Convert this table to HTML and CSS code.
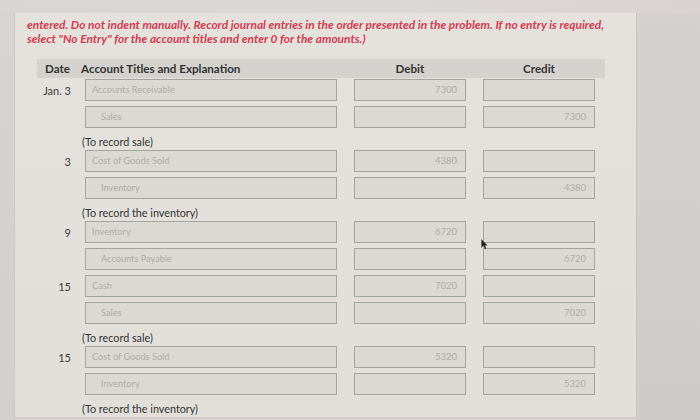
FILE: index.html
```html
<!DOCTYPE html>
<html>
<head>
<meta charset="utf-8">
<link rel="stylesheet" href="styles.css">
</head>
<body>
<div class="topbar"></div>
<div class="main">
  <div class="side-left"></div>
  <div class="panel">
    <p class="instr">entered. Do not indent manually. Record journal entries in the order presented in the problem. If no entry is required,<br>select "No Entry" for the account titles and enter 0 for the amounts.)</p>
    <div class="journal">
      <div class="head">
        <span class="h-date">Date</span>
        <span class="h-acct">Account Titles and Explanation</span>
        <span class="h-debit">Debit</span>
        <span class="h-credit">Credit</span>
      </div>

      <div class="entry first"><span class="date">Jan. 3</span><div class="box acct">Accounts Receivable</div><div class="box amt">7300</div><div class="box amt"></div></div>
      <div class="entry"><span class="date"></span><div class="box acct cr">Sales</div><div class="box amt"></div><div class="box amt">7300</div></div>
      <div class="note">(To record sale)</div>

      <div class="entry after-note"><span class="date">3</span><div class="box acct">Cost of Goods Sold</div><div class="box amt">4380</div><div class="box amt"></div></div>
      <div class="entry"><span class="date"></span><div class="box acct cr">Inventory</div><div class="box amt"></div><div class="box amt">4380</div></div>
      <div class="note">(To record the inventory)</div>

      <div class="entry after-note"><span class="date">9</span><div class="box acct">Inventory</div><div class="box amt">6720</div><div class="box amt"></div></div>
      <div class="entry"><span class="date"></span><div class="box acct cr">Accounts Payable</div><div class="box amt"></div><div class="box amt">6720</div></div>

      <div class="entry"><span class="date">15</span><div class="box acct">Cash</div><div class="box amt">7020</div><div class="box amt"></div></div>
      <div class="entry"><span class="date"></span><div class="box acct cr">Sales</div><div class="box amt"></div><div class="box amt">7020</div></div>
      <div class="note">(To record sale)</div>

      <div class="entry after-note"><span class="date">15</span><div class="box acct">Cost of Goods Sold</div><div class="box amt">5320</div><div class="box amt"></div></div>
      <div class="entry"><span class="date"></span><div class="box acct cr">Inventory</div><div class="box amt"></div><div class="box amt">5320</div></div>
      <div class="note">(To record the inventory)</div>
    </div>
    <svg class="cursor" width="7" height="11" viewBox="0 0 7 11"><path d="M0.5 0.5 L0.5 8.5 L2.5 6.8 L4 10 L5.2 9.4 L3.8 6.3 L6.2 6.2 Z" fill="#222" stroke="#555" stroke-width="0.5"/></svg>
  </div>
  <div class="side-right"></div>
</div>
</body>
</html>
```
FILE: styles.css
```css
html, body {
  margin: 0;
  padding: 0;
}
body {
  width: 700px;
  height: 420px;
  overflow: hidden;
  background: #d6d1d0;
  font-family: Lato, "Open Sans", sans-serif;
}
.topbar {
  height: 13px;
  background: linear-gradient(to right, #d9d5d4, #ddd8d8 60%, #d8d2d3);
}
.main {
  display: flex;
  height: 407px;
}
.side-left {
  width: 14px;
  background: linear-gradient(to bottom, #d8d4d2, #d3cfcc);
  border-right: 1px solid #cac6c3;
}
.panel {
  position: relative;
  width: 621px;
  height: 404px;
  background: linear-gradient(to bottom, #e5e2de, #e3e0db 60%, #e2dfda);
  border-right: 1px solid #c6c2c1;
  border-bottom: 1px solid #cfcbc8;
}
.side-right {
  flex: 1;
  background: linear-gradient(to bottom, #d6d1d1, #d3cece 50%, #d0cbcb);
}
.instr {
  margin: 5px 0 0 12px;
  color: #d43d4e;
  font-style: italic;
  font-weight: 700;
  font-size: 11.9px;
  line-height: 14px;
}
.journal {
  margin: 13px 0 0 22px;
  width: 568px;
}
.head {
  display: flex;
  align-items: center;
  height: 19px;
  background: #d4d2ce;
  font-weight: 700;
  font-size: 11.6px;
  color: #333;
}
.h-date {
  margin-left: 8px;
  width: 36px;
}
.h-acct {
  width: 273px;
}
.h-debit {
  width: 112px;
  text-align: center;
}
.h-credit {
  margin-left: 17px;
  width: 112px;
  text-align: center;
}
.entry {
  display: flex;
  align-items: center;
  height: 22px;
  margin-top: 5px;
}
.entry.first {
  margin-top: 1px;
}
.entry.after-note {
  margin-top: 0;
}
.date {
  width: 34px;
  padding-right: 14px;
  text-align: right;
  font-size: 11px;
  color: #3b3b3b;
}
.box {
  box-sizing: border-box;
  height: 22px;
  line-height: 20px;
  background: #dbd9d4;
  border: 1px solid #a3a69e;
  font-size: 9.2px;
  color: #aeaca7;
}
.acct {
  width: 252px;
  padding-left: 6px;
}
.acct.cr {
  padding-left: 15px;
}
.amt {
  width: 112px;
  margin-left: 17px;
  padding-right: 8px;
  text-align: right;
  font-size: 9.5px;
}
.note {
  height: 17px;
  padding-top: 5px;
  line-height: 17px;
  margin-left: 45px;
  font-size: 10.8px;
  color: #333;
}
.cursor {
  position: absolute;
  left: 466px;
  top: 226px;
}
```
